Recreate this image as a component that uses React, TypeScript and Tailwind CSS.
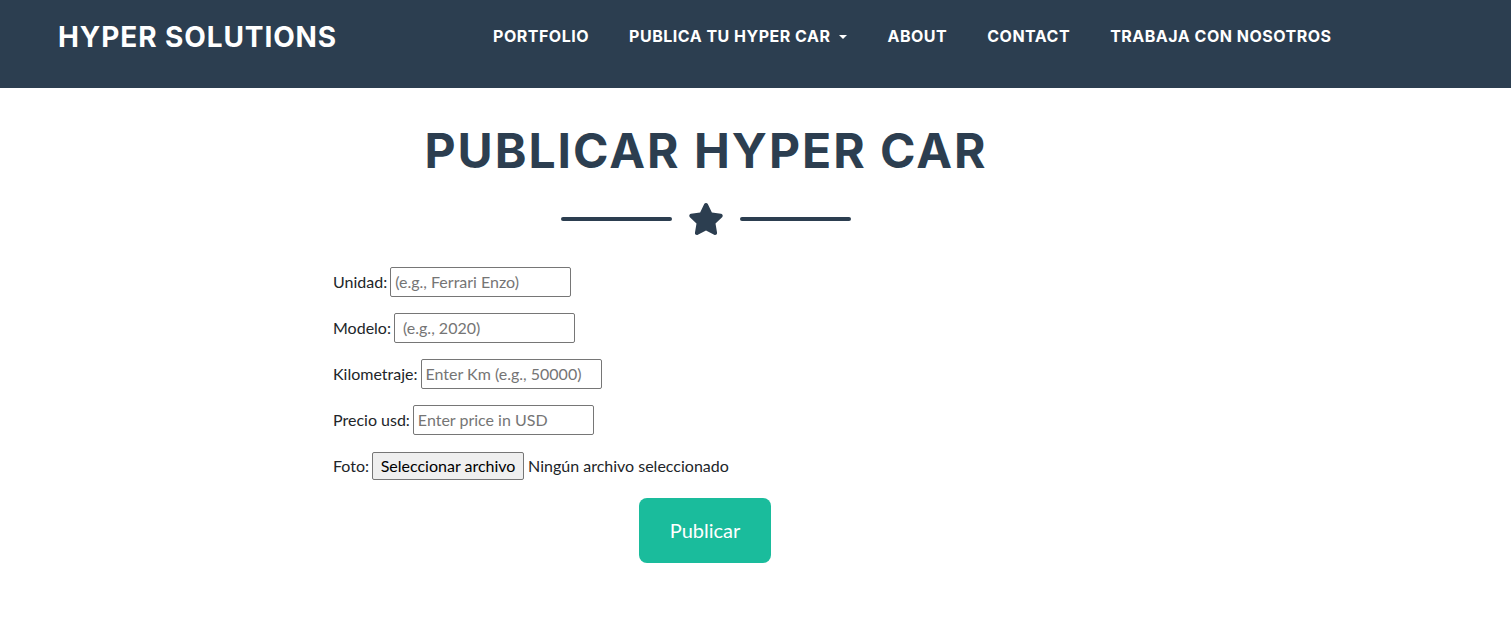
import React from "react";

const heading = { fontFamily: "Inter, 'DejaVu Sans', sans-serif" };
const body = { fontFamily: "Lato, 'Liberation Sans', sans-serif" };

function Star() {
  return (
    <svg viewBox="0 0 576 512" className="h-8 w-9 fill-[#2c3e50]" aria-hidden>
      <path d="M259.3 17.8L194 150.2 47.9 171.5c-26.2 3.8-36.7 36.1-17.7 54.6l105.7 103-25 145.5c-4.5 26.3 23.2 46 46.4 33.7L288 439.6l130.7 68.7c23.2 12.2 50.9-7.4 46.4-33.7l-25-145.5 105.7-103c19-18.5 8.5-50.8-17.7-54.6L382 150.2 316.7 17.8c-11.7-23.6-45.6-23.9-57.4 0z" />
    </svg>
  );
}

function Field({ label, placeholder }: { label: string; placeholder: string }) {
  return (
    <div className="mb-4 flex h-[30px] items-center">
      <label className="mr-[3px]">{label}</label>
      <input
        className="h-[30px] w-[181px] rounded-[2px] border border-[#767676] px-[4px] text-base text-[#212529] placeholder:text-[#757575]"
        placeholder={placeholder}
      />
    </div>
  );
}

export default function App() {
  return (
    <div className="min-h-[631px] bg-white text-[#212529]" style={body}>
      {/* navbar */}
      <nav className="flex h-[88px] items-start bg-[#2c3e50] pl-[58px] pt-[23px] text-white">
        <a className="text-[28px] font-bold uppercase leading-none tracking-[0.9px]" style={heading}>
          Hyper Solutions
        </a>
        <ul
          className="ml-[136px] mt-px flex items-center text-[16px] font-bold uppercase leading-6 tracking-[0.5px]"
          style={heading}
        >
          <li className="px-5">Portfolio</li>
          <li className="flex items-center px-5">
            Publica tu Hyper Car
            <span className="ml-[9px] mt-[1px] border-x-[4px] border-t-[4px] border-x-transparent border-t-white" />
          </li>
          <li className="px-5">About</li>
          <li className="px-5">Contact</li>
          <li className="px-5">Trabaja con nosotros</li>
        </ul>
      </nav>

      {/* form section */}
      <section className="ml-[333px] w-[746px] pt-[34px]">
        <h2
          className="text-center text-[48px] font-bold uppercase leading-[1.2] tracking-[2px] text-[#2c3e50]"
          style={heading}
        >
          Publicar Hyper Car
        </h2>
        <div className="mt-[23px] flex items-center justify-center gap-4">
          <div className="h-1 w-[111px] rounded-full bg-[#2c3e50]" />
          <Star />
          <div className="h-1 w-[111px] rounded-full bg-[#2c3e50]" />
        </div>

        <form className="mt-[32px] text-base">
          <Field label="Unidad:" placeholder="(e.g., Ferrari Enzo)" />
          <Field label="Modelo:" placeholder=" (e.g., 2020)" />
          <Field label="Kilometraje:" placeholder="Enter Km (e.g., 50000)" />
          <Field label="Precio usd:" placeholder="Enter price in USD" />
          <div className="mb-[17px] flex h-[30px] items-center">
            <span className="mr-[3px]">Foto:</span>
            <span className="flex h-[28px] w-[152px] items-center justify-center rounded-[2px] border border-[#767676] bg-[#efefef] text-[16px] text-black">
              Seleccionar archivo
            </span>
            <span className="ml-[4px]">Ningún archivo seleccionado</span>
          </div>
          <div className="flex justify-center pr-[2px]">
            <button
              type="button"
              className="h-[65px] w-[132px] rounded-lg bg-[#1abc9c] text-[20px] text-white"
            >
              Publicar
            </button>
          </div>
        </form>
      </section>
    </div>
  );
}
